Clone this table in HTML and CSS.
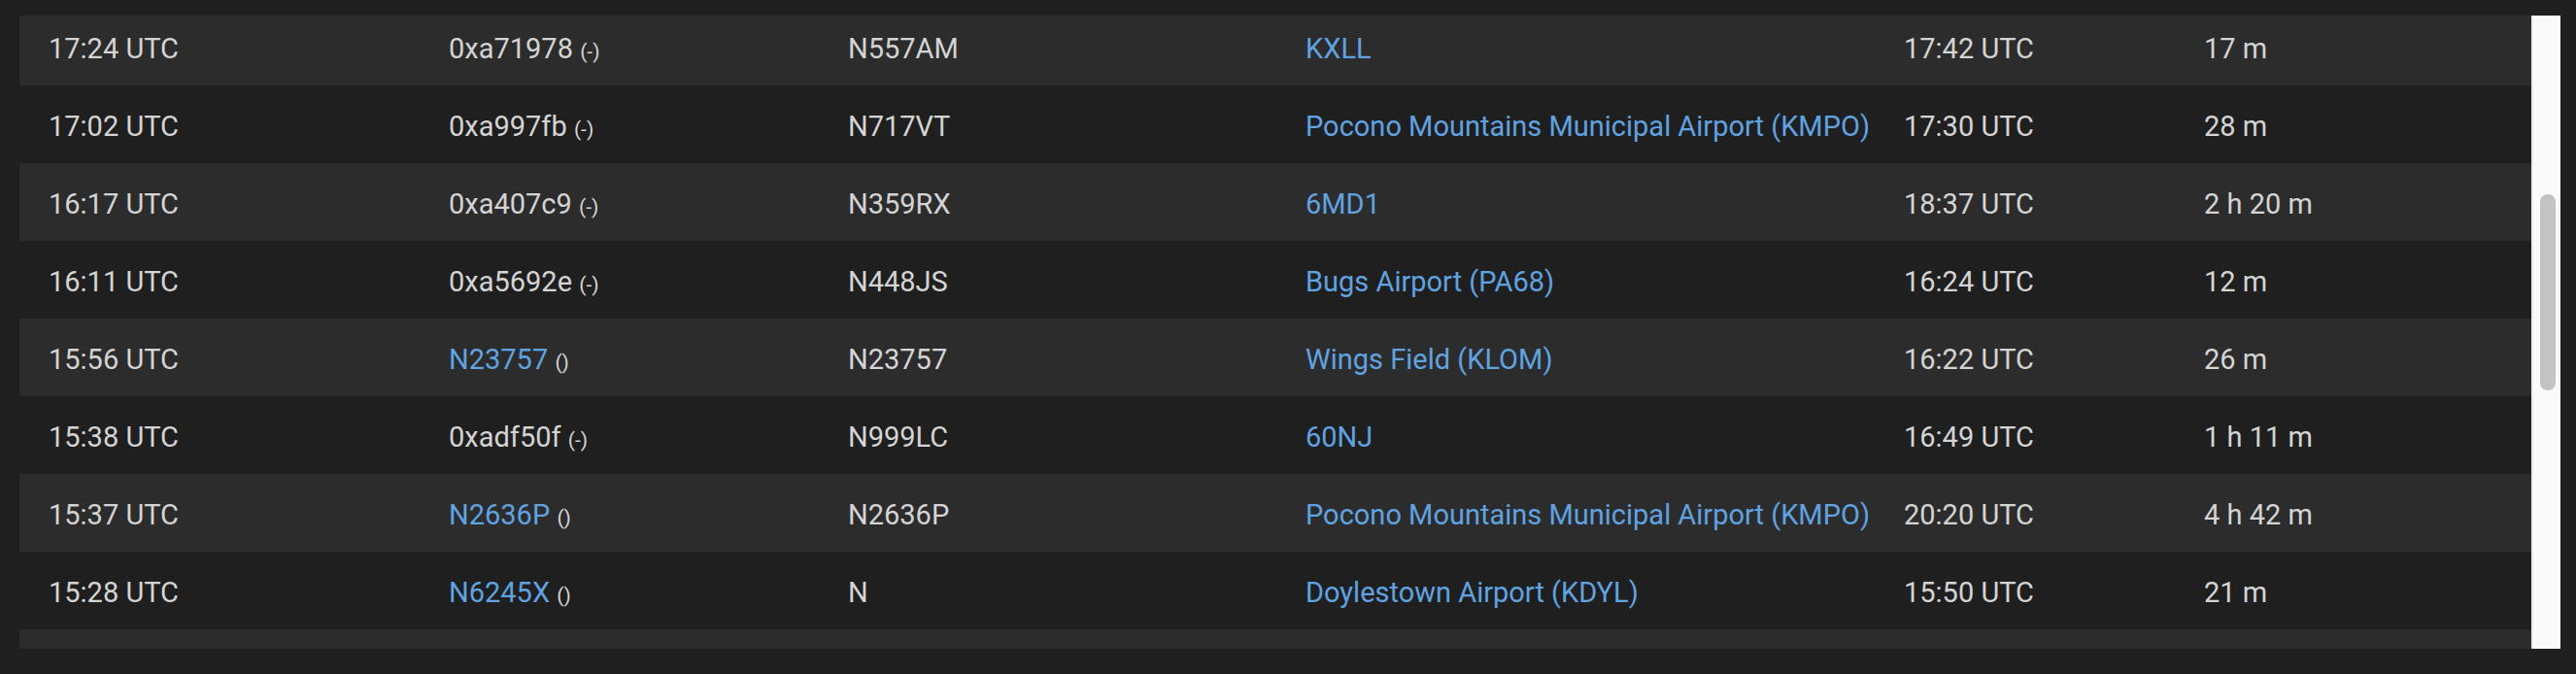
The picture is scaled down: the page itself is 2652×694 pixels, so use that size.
FILE: index.html
```html
<!DOCTYPE html>
<html lang="en">
<head>
<meta charset="utf-8">
<title>Flights</title>
<link rel="stylesheet" href="styles.css">
</head>
<body>
<div class="panel">
  <div class="list">
    <div class="rows">
      <div class="row">
        <div class="cell">17:24 UTC</div>
        <div class="cell">0xa71978 <span class="sub">(-)</span></div>
        <div class="cell">N557AM</div>
        <div class="cell"><a class="link" href="#">KXLL</a></div>
        <div class="cell">17:42 UTC</div>
        <div class="cell">17 m</div>
      </div>
      <div class="row">
        <div class="cell">17:02 UTC</div>
        <div class="cell">0xa997fb <span class="sub">(-)</span></div>
        <div class="cell">N717VT</div>
        <div class="cell"><a class="link" href="#">Pocono Mountains Municipal Airport (KMPO)</a></div>
        <div class="cell">17:30 UTC</div>
        <div class="cell">28 m</div>
      </div>
      <div class="row">
        <div class="cell">16:17 UTC</div>
        <div class="cell">0xa407c9 <span class="sub">(-)</span></div>
        <div class="cell">N359RX</div>
        <div class="cell"><a class="link" href="#">6MD1</a></div>
        <div class="cell">18:37 UTC</div>
        <div class="cell">2 h 20 m</div>
      </div>
      <div class="row">
        <div class="cell">16:11 UTC</div>
        <div class="cell">0xa5692e <span class="sub">(-)</span></div>
        <div class="cell">N448JS</div>
        <div class="cell"><a class="link" href="#">Bugs Airport (PA68)</a></div>
        <div class="cell">16:24 UTC</div>
        <div class="cell">12 m</div>
      </div>
      <div class="row">
        <div class="cell">15:56 UTC</div>
        <div class="cell"><a class="link" href="#">N23757</a> <span class="sub">()</span></div>
        <div class="cell">N23757</div>
        <div class="cell"><a class="link" href="#">Wings Field (KLOM)</a></div>
        <div class="cell">16:22 UTC</div>
        <div class="cell">26 m</div>
      </div>
      <div class="row">
        <div class="cell">15:38 UTC</div>
        <div class="cell">0xadf50f <span class="sub">(-)</span></div>
        <div class="cell">N999LC</div>
        <div class="cell"><a class="link" href="#">60NJ</a></div>
        <div class="cell">16:49 UTC</div>
        <div class="cell">1 h 11 m</div>
      </div>
      <div class="row">
        <div class="cell">15:37 UTC</div>
        <div class="cell"><a class="link" href="#">N2636P</a> <span class="sub">()</span></div>
        <div class="cell">N2636P</div>
        <div class="cell"><a class="link" href="#">Pocono Mountains Municipal Airport (KMPO)</a></div>
        <div class="cell">20:20 UTC</div>
        <div class="cell">4 h 42 m</div>
      </div>
      <div class="row">
        <div class="cell">15:28 UTC</div>
        <div class="cell"><a class="link" href="#">N6245X</a> <span class="sub">()</span></div>
        <div class="cell">N</div>
        <div class="cell"><a class="link" href="#">Doylestown Airport (KDYL)</a></div>
        <div class="cell">15:50 UTC</div>
        <div class="cell">21 m</div>
      </div>
      <div class="row">
        <div class="cell"></div>
        <div class="cell"></div>
        <div class="cell"></div>
        <div class="cell"></div>
        <div class="cell"></div>
        <div class="cell"></div>
      </div>
    </div>
  </div>
  <div class="scrollbar"><div class="thumb"></div></div>
</div>
</body>
</html>
```

FILE: styles.css
```css
html, body {
  margin: 0;
  padding: 0;
  background: #1f1f1f;
  overflow: hidden;
}

body {
  font-family: Roboto, "Liberation Sans", sans-serif;
  font-size: 29px;
  color: #d4d4d4;
}

.panel {
  display: flex;
  height: 652px;
  margin: 16px 16px 26px 20px;
}

.list {
  flex: 1;
  overflow: hidden;
}

.rows {
  margin-top: -8px;
}

.row {
  display: grid;
  grid-template-columns: 412px 411px 471px 616px 309px 1fr;
  height: 80px;
}

.row:nth-child(odd) {
  background: #2c2c2c;
}

.row:nth-child(even) {
  background: #1f1f1f;
}

.cell {
  padding: 26px 0 0 30px;
  line-height: 32px;
  white-space: nowrap;
}

.link {
  color: #5fa3e2;
  text-decoration: none;
}

.sub {
  font-size: 21px;
  line-height: 1;
  color: #d4d4d4;
}

.scrollbar {
  width: 28px;
  background: #fafafa;
  border-left: 2px solid #ebebeb;
  display: flex;
  justify-content: center;
  padding-top: 184px;
  box-sizing: content-box;
}

.thumb {
  width: 16px;
  height: 202px;
  margin-left: 2px;
  border-radius: 8px;
  background: #c3c3c3;
}
```
